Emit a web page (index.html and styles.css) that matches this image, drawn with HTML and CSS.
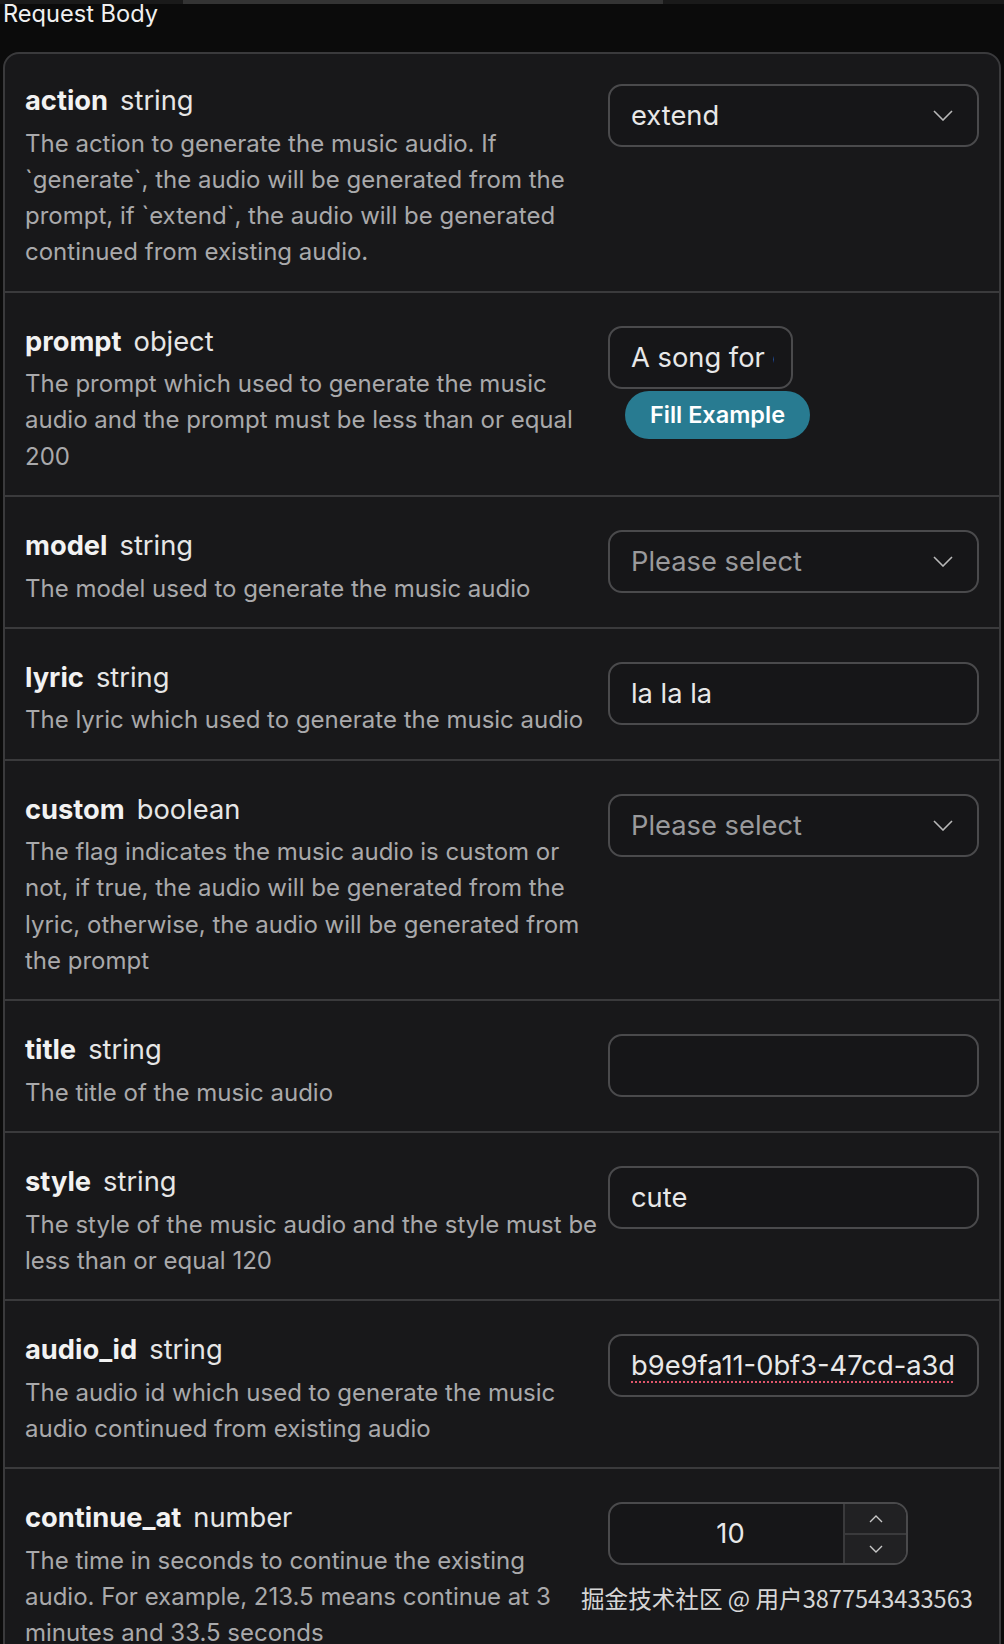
FILE: index.html
```html
<!DOCTYPE html>
<html lang="en">
<head>
<meta charset="utf-8">
<title>Request Body</title>
<link rel="stylesheet" href="styles.css">
</head>
<body>
<div class="topbar"><div class="topbar-thumb"></div></div>
<h2 class="section-title">Request Body</h2>
<div class="card">
  <div class="row">
    <div class="info">
      <div class="field"><span class="name">action</span><span class="type">string</span></div>
      <p class="desc">The action to generate the music audio. If `generate`, the audio will be generated from the prompt, if `extend`, the audio will be generated continued from existing audio.</p>
    </div>
    <div class="control">
      <div class="box select"><span class="value">extend</span><svg class="chev" viewBox="0 0 20 11" width="20" height="11"><polyline points="1,1 10,10 19,1"/></svg></div>
    </div>
  </div>
  <div class="row">
    <div class="info">
      <div class="field"><span class="name">prompt</span><span class="type">object</span></div>
      <p class="desc">The prompt which used to generate the music audio and the prompt must be less than or equal 200</p>
    </div>
    <div class="control">
      <div class="box short"><span class="clip">A song for children</span></div>
      <button class="fill-btn">Fill Example</button>
    </div>
  </div>
  <div class="row">
    <div class="info">
      <div class="field"><span class="name">model</span><span class="type">string</span></div>
      <p class="desc">The model used to generate the music audio</p>
    </div>
    <div class="control">
      <div class="box select"><span class="placeholder">Please select</span><svg class="chev" viewBox="0 0 20 11" width="20" height="11"><polyline points="1,1 10,10 19,1"/></svg></div>
    </div>
  </div>
  <div class="row">
    <div class="info">
      <div class="field"><span class="name">lyric</span><span class="type">string</span></div>
      <p class="desc">The lyric which used to generate the music audio</p>
    </div>
    <div class="control">
      <div class="box"><span class="value">la la la</span></div>
    </div>
  </div>
  <div class="row">
    <div class="info">
      <div class="field"><span class="name">custom</span><span class="type">boolean</span></div>
      <p class="desc">The flag indicates the music audio is custom or not, if true, the audio will be generated from the lyric, otherwise, the audio will be generated from the prompt</p>
    </div>
    <div class="control">
      <div class="box select"><span class="placeholder">Please select</span><svg class="chev" viewBox="0 0 20 11" width="20" height="11"><polyline points="1,1 10,10 19,1"/></svg></div>
    </div>
  </div>
  <div class="row">
    <div class="info">
      <div class="field"><span class="name">title</span><span class="type">string</span></div>
      <p class="desc">The title of the music audio</p>
    </div>
    <div class="control">
      <div class="box"></div>
    </div>
  </div>
  <div class="row">
    <div class="info">
      <div class="field"><span class="name">style</span><span class="type">string</span></div>
      <p class="desc">The style of the music audio and the style must be less than or equal 120</p>
    </div>
    <div class="control">
      <div class="box"><span class="value">cute</span></div>
    </div>
  </div>
  <div class="row">
    <div class="info">
      <div class="field"><span class="name">audio_id</span><span class="type">string</span></div>
      <p class="desc">The audio id which used to generate the music audio continued from existing audio</p>
    </div>
    <div class="control">
      <div class="box"><span class="value misspelled">b9e9fa11-0bf3-47cd-a3d</span></div>
    </div>
  </div>
  <div class="row">
    <div class="info">
      <div class="field"><span class="name">continue_at</span><span class="type">number</span></div>
      <p class="desc">The time in seconds to continue the existing audio.&nbsp;For example, 213.5 means continue at 3 minutes and 33.5 seconds</p>
    </div>
    <div class="control">
      <div class="box number">
        <span class="num-value">10</span>
        <div class="spin">
          <div class="spin-btn"><svg viewBox="0 0 14 8" width="14" height="8"><polyline points="1,7 7,1 13,7"/></svg></div>
          <div class="spin-btn"><svg viewBox="0 0 14 8" width="14" height="8"><polyline points="1,1 7,7 13,1"/></svg></div>
        </div>
      </div>
    </div>
  </div>
</div>
<div class="watermark">掘金技术社区 @ 用户3877543433563</div>
</body>
</html>
```
FILE: styles.css
```css
* { box-sizing: border-box; }
html, body {
  margin: 0;
  padding: 0;
  background: #0b0b0b;
}
body {
  position: relative;
  width: 1004px;
  height: 1644px;
  overflow: hidden;
  font-family: Inter, "Noto Sans", sans-serif;
  color: #ececec;
}
.topbar {
  height: 4px;
  background: #1a1a1a;
}
.topbar-thumb {
  margin-left: 183px;
  width: 480px;
  height: 4px;
  background: #343434;
}
.section-title {
  margin: 0 0 29px 3px;
  font-size: 23.6px;
  line-height: 19px;
  font-weight: 400;
  color: #f0f0f0;
}
.card {
  margin: 0 3px;
  background: #18181a;
  border: 2px solid #3a3a3c;
  border-radius: 16px;
}
.row {
  display: grid;
  grid-template-columns: 575px 371px;
  column-gap: 8px;
  padding: 30px 20px 20px 20px;
  border-top: 2px solid #3a3a3c;
}
.row:first-child {
  border-top: none;
  padding-top: 28px;
}
.field {
  display: flex;
  align-items: baseline;
  gap: 12px;
  font-size: 27.3px;
  line-height: 38px;
}
.name {
  font-weight: 700;
  color: #f2f2f2;
}
.type {
  font-weight: 400;
  color: #e6e6e6;
}
.desc {
  margin: 5.5px 0 0;
  font-size: 24px;
  line-height: 36.3px;
  color: #a9a9ab;
}
.control {
  padding-top: 3px;
}
.row:first-child .control {
  padding-top: 2px;
}
.box {
  height: 63px;
  border: 2px solid #4a4a4c;
  border-radius: 14px;
  display: flex;
  align-items: center;
  padding: 0 24px 0 21px;
  font-size: 27.3px;
  color: #e8e8e8;
  background: #161618;
  white-space: nowrap;
}
.select {
  justify-content: space-between;
}
.placeholder {
  color: #9a9a9c;
}
.chev {
  fill: none;
  stroke: #b8b8b8;
  stroke-width: 1.6;
}
.short {
  width: 185px;
  padding: 0 17px 0 21px;
}
.clip {
  display: block;
  overflow: hidden;
  white-space: nowrap;
}
.fill-btn {
  display: block;
  margin: 2px 0 0 17px;
  width: 185px;
  height: 48px;
  border: none;
  border-radius: 24px;
  background: #287b91;
  color: #ffffff;
  font-family: Inter, "Noto Sans", sans-serif;
  font-size: 23.5px;
  font-weight: 600;
  padding: 0;
}
.misspelled {
  text-decoration: underline dotted #e0566a 2px;
  text-underline-offset: 6px;
}
.number {
  width: 300px;
  padding: 0;
  overflow: hidden;
}
.num-value {
  flex: 1;
  text-align: center;
  padding-left: 8px;
}
.spin {
  width: 63px;
  height: 100%;
  display: flex;
  flex-direction: column;
  border-left: 2px solid #3a3a3c;
  background: #212123;
}
.spin-btn {
  flex: 1;
  display: flex;
  align-items: center;
  justify-content: center;
}
.spin-btn + .spin-btn {
  border-top: 2px solid #3a3a3c;
}
.spin-btn svg {
  fill: none;
  stroke: #c8c8c8;
  stroke-width: 1.4;
}
.watermark {
  position: absolute;
  left: 581px;
  top: 1581px;
  font-family: "Noto Sans CJK SC", sans-serif;
  font-size: 23.6px;
  line-height: 34px;
  color: #d6d6d6;
  white-space: nowrap;
}
```
